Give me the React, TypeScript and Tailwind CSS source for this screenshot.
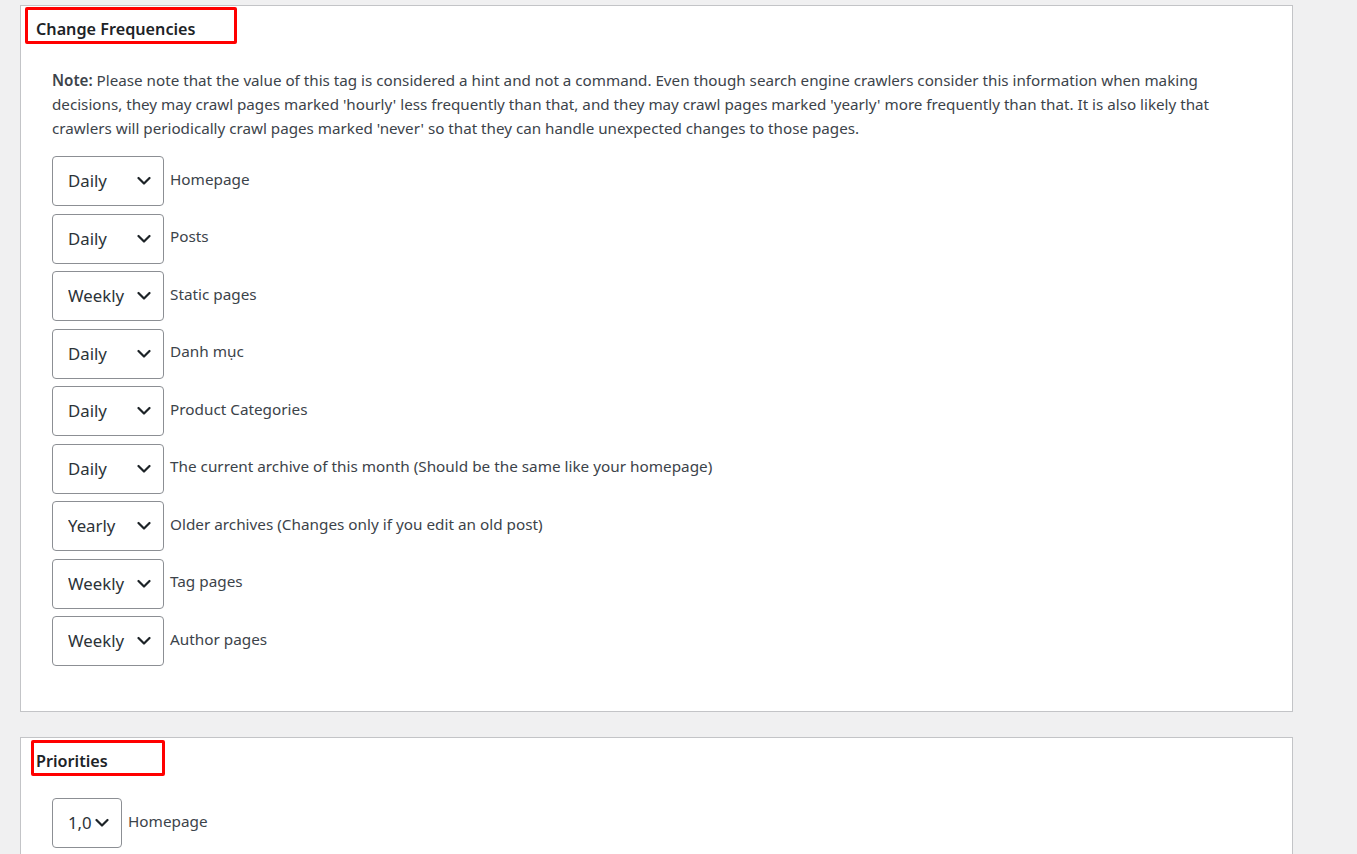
const freqRows = [
  { value: "Daily", label: "Homepage" },
  { value: "Daily", label: "Posts" },
  { value: "Weekly", label: "Static pages" },
  { value: "Daily", label: "Danh mục" },
  { value: "Daily", label: "Product Categories" },
  { value: "Daily", label: "The current archive of this month (Should be the same like your homepage)" },
  { value: "Yearly", label: "Older archives (Changes only if you edit an old post)" },
  { value: "Weekly", label: "Tag pages" },
  { value: "Weekly", label: "Author pages" },
];

const options = ["Always", "Hourly", "Daily", "Weekly", "Monthly", "Yearly", "Never"];

function Chevron({ className }: { className: string }) {
  return (
    <svg viewBox="0 0 14 9" fill="none" className={className}>
      <path d="M1.5 1.5 7 7 12.5 1.5" stroke="currentColor" strokeWidth="2.2" strokeLinecap="round" strokeLinejoin="round" />
    </svg>
  );
}

function Select({ value, width, chevron, items }: { value: string; width: string; chevron: string; items: string[] }) {
  return (
    <div className={`relative h-[50px] shrink-0 ${width}`}>
      <select
        defaultValue={value}
        className="h-full w-full appearance-none rounded-[4px] border border-[#8c8f94] bg-white pl-[15px] text-[16.8px] text-[#2c3338] outline-none"
      >
        {items.map((o) => (
          <option key={o}>{o}</option>
        ))}
      </select>
      <Chevron className={`pointer-events-none absolute top-1/2 h-[9px] w-[14px] -translate-y-1/2 text-[#1d2327] ${chevron}`} />
    </div>
  );
}

function Header({ title, box }: { title: string; box: string }) {
  return (
    <div className="relative px-[15px] pt-[12px]">
      <h2 className="text-[16.2px] font-semibold leading-[22px] text-[#1d2327]">{title}</h2>
      <span className={`pointer-events-none absolute rounded-[2px] border-[3px] border-[#ff0000] ${box}`} />
    </div>
  );
}

export default function App() {
  return (
    <div className="min-h-screen bg-[#f0f0f1] pl-[20px] pt-[5px] font-['Noto_Sans',sans-serif]">
      <div className="w-[1273px]">
        <section className="border border-[#c3c4c7] bg-white pb-[45px]">
          <Header title="Change Frequencies" box="left-[4px] top-[1px] h-[37px] w-[212px]" />
          <div className="pl-[31px] pt-[28px]">
            <p className="text-[15.2px] leading-[24px] text-[#3c434a]">
              <b className="font-semibold">Note:</b> Please note that the value of this tag is considered a hint and not a command. Even though search engine crawlers consider this information when making
              <br />
              decisions, they may crawl pages marked 'hourly' less frequently than that, and they may crawl pages marked 'yearly' more frequently than that. It is also likely that
              <br />
              crawlers will periodically crawl pages marked 'never' so that they can handle unexpected changes to those pages.
            </p>
            <div className="mt-[16px] flex flex-col gap-[7.5px]">
              {freqRows.map((r) => (
                <div key={r.label} className="flex items-center gap-[6px]">
                  <Select value={r.value} width="w-[112px]" chevron="right-[13px]" items={options} />
                  <span className="-mt-[4px] text-[15.3px] text-[#3c434a]">{r.label}</span>
                </div>
              ))}
            </div>
          </div>
        </section>

        <section className="mt-[25px] border border-[#c3c4c7] bg-white pb-[20px]">
          <Header title="Priorities" box="left-[10px] top-[2px] h-[36px] w-[134px]" />
          <div className="pl-[31px] pt-[26px]">
            <div className="flex items-center gap-[6px]">
              <Select value="1,0" width="w-[70px]" chevron="right-[13px]" items={["0,0", "0,1", "0,2", "0,3", "0,4", "0,5", "0,6", "0,7", "0,8", "0,9", "1,0"]} />
              <span className="-mt-[4px] text-[15.3px] text-[#3c434a]">Homepage</span>
            </div>
          </div>
        </section>
      </div>
    </div>
  );
}
